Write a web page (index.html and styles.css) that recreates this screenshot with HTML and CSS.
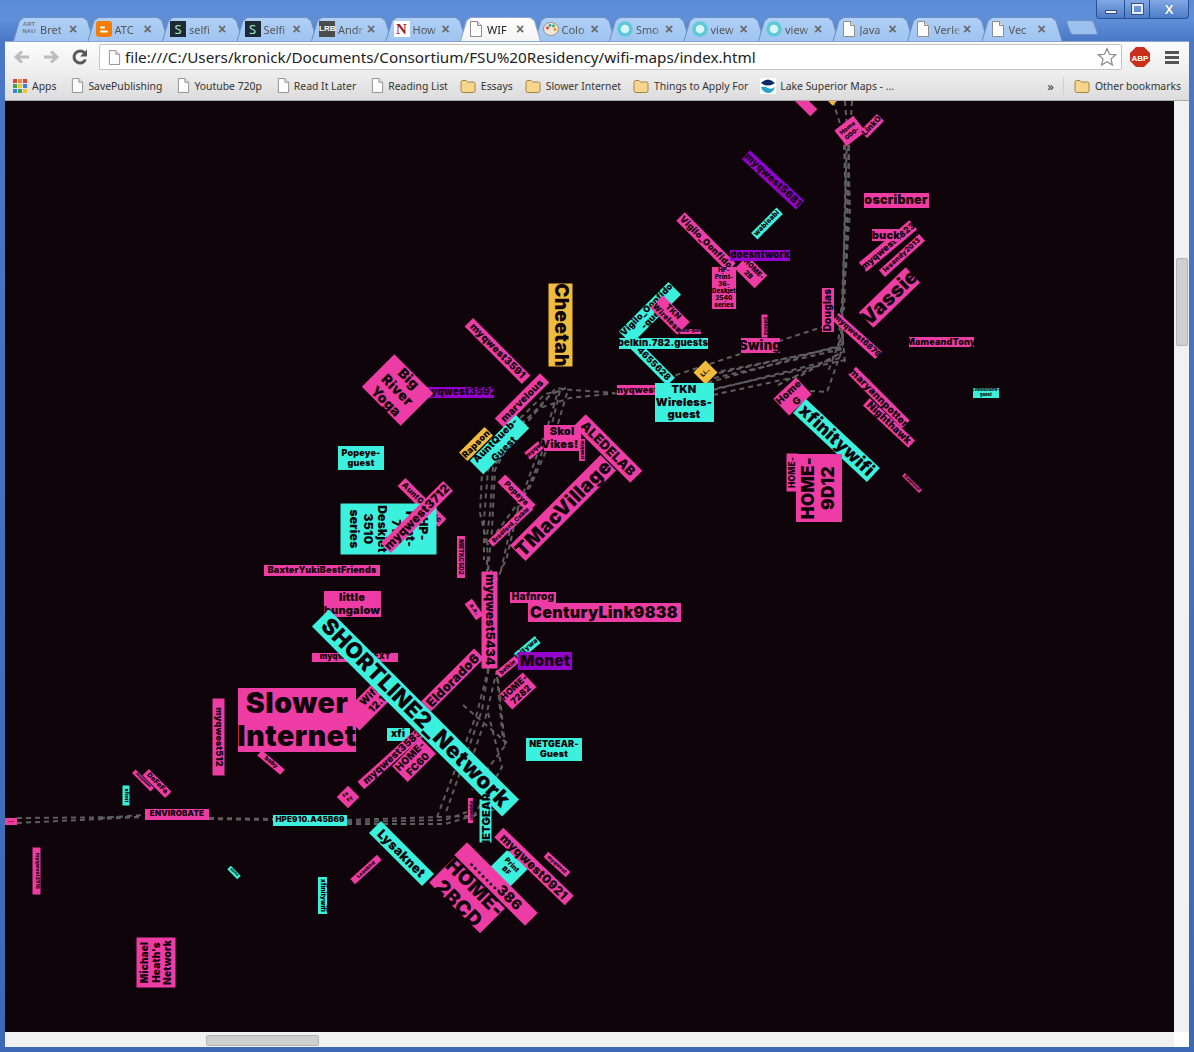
FILE: index.html

```html
<!DOCTYPE html>
<html lang="en">
<head>
    <meta charset="UTF-8">
    <title>WIFI Maps</title>
    <link rel="stylesheet" href="styles.css">
</head>
<body>
    <svg class="icon-defs" width="0" height="0">
        <symbol id="doc" viewBox="0 0 14 16">
            <path d="M1.5 .5h7l4 4v11h-11z" fill="#fdfdfd" stroke="#8d8d8d"/>
            <path d="M8.5 .5v4h4" fill="#e4e4e4" stroke="#8d8d8d"/>
        </symbol>
        <symbol id="folder" viewBox="0 0 16 14">
            <path d="M1 3.5q0-2 2-2h3l1.500 1.500h6q1.500 0 1.500 1.500v7q0 2-2 2h-10q-2 0-2-2z" fill="#f6d68c" stroke="#a38447"/>
        </symbol>
        <symbol id="ring" viewBox="0 0 16 16">
            <circle cx="8" cy="8" r="6" fill="#d9f5f5" stroke="#5cc9d4" stroke-width="3.400"/>
        </symbol>
    </svg>

    <div class="window">
        <div class="tabstrip">
            <div class="tabs">
                <div class="tab">
                    <span class="fav fav-art">ART<br>NAU</span>
                    <span class="title">Bret</span><span class="close">×</span>
                </div>
                <div class="tab">
                    <svg class="fav" viewBox="0 0 16 16"><rect width="16" height="16" rx="3" fill="#f57d00"/><path d="M5 10.500h6M5 6.500h3" stroke="#fff" stroke-width="2" stroke-linecap="round"/></svg>
                    <span class="title">ATC</span><span class="close">×</span>
                </div>
                <div class="tab">
                    <span class="fav fav-s">S</span>
                    <span class="title">selfi</span><span class="close">×</span>
                </div>
                <div class="tab">
                    <span class="fav fav-s">S</span>
                    <span class="title">Selfi</span><span class="close">×</span>
                </div>
                <div class="tab">
                    <span class="fav fav-lrb">LRB</span>
                    <span class="title">Andr</span><span class="close">×</span>
                </div>
                <div class="tab">
                    <span class="fav fav-n">N</span>
                    <span class="title">How</span><span class="close">×</span>
                </div>
                <div class="tab active">
                    <svg class="fav"><use href="#doc"/></svg>
                    <span class="title">WIF</span><span class="close">×</span>
                </div>
                <div class="tab">
                    <svg class="fav" viewBox="0 0 16 16"><ellipse cx="8" cy="8" rx="7.500" ry="6.500" fill="#efe6d8" stroke="#9a9080"/><circle cx="4.500" cy="7" r="1.400" fill="#d33"/><circle cx="7" cy="4.500" r="1.400" fill="#39b"/><circle cx="10.500" cy="5" r="1.400" fill="#4a4"/><circle cx="12" cy="8.500" r="1.400" fill="#e90"/></svg>
                    <span class="title">Colo</span><span class="close">×</span>
                </div>
                <div class="tab">
                    <svg class="fav"><use href="#ring"/></svg>
                    <span class="title">Smo</span><span class="close">×</span>
                </div>
                <div class="tab">
                    <svg class="fav"><use href="#ring"/></svg>
                    <span class="title">view</span><span class="close">×</span>
                </div>
                <div class="tab">
                    <svg class="fav"><use href="#ring"/></svg>
                    <span class="title">view</span><span class="close">×</span>
                </div>
                <div class="tab">
                    <svg class="fav"><use href="#doc"/></svg>
                    <span class="title">Java</span><span class="close">×</span>
                </div>
                <div class="tab">
                    <svg class="fav"><use href="#doc"/></svg>
                    <span class="title">Verle</span><span class="close">×</span>
                </div>
                <div class="tab">
                    <svg class="fav"><use href="#doc"/></svg>
                    <span class="title">Vec</span><span class="close">×</span>
                </div>
                <div class="new-tab"></div>
            </div>
            <div class="window-controls">
                <span class="ctl ctl-min"><i></i></span>
                <span class="ctl ctl-max"><i></i></span>
                <span class="ctl ctl-close">X</span>
            </div>
        </div>

        <div class="toolbar">
            <svg class="nav-icon" viewBox="0 0 18 18"><path d="M16 9H4M9 3.500 3 9l6 5.500" fill="none" stroke="#bcbcbc" stroke-width="3"/></svg>
            <svg class="nav-icon" viewBox="0 0 18 18"><path d="M2 9h12M9 3.500 15 9l-6 5.500" fill="none" stroke="#bcbcbc" stroke-width="3"/></svg>
            <svg class="nav-icon" viewBox="0 0 18 18"><path d="M14.500 11.500A6 6 0 1 1 13.500 5" fill="none" stroke="#5a5a5a" stroke-width="3"/><path d="M16 1.500V8.500H9z" fill="#5a5a5a"/></svg>
            <div class="omnibox">
                <svg class="omni-doc"><use href="#doc"/></svg>
                <span class="url">file:///C:/Users/kronick/Documents/Consortium/FSU%20Residency/wifi-maps/index.html</span>
                <svg class="star" viewBox="0 0 20 20"><path d="M10 1.500l2.500 5.800 6.200.5-4.700 4.100 1.400 6.100L10 14.800l-5.400 3.200 1.400-6.100L1.300 7.800l6.200-.5z" fill="#fff" stroke="#8a8a8a" stroke-width="1.200"/></svg>
            </div>
            <svg class="abp" viewBox="0 0 20 20"><path d="M6 0h8l6 6v8l-6 6H6l-6-6V6z" fill="#c8301e"/><text x="10" y="13.500" text-anchor="middle" class="abp-text">ABP</text></svg>
            <div class="menu"><i></i><i></i><i></i></div>
        </div>

        <div class="bookmarks">
            <div class="bm bm-apps">
                <span class="apps-grid">
                    <i class="r"></i><i class="o"></i><i class="r"></i>
                    <i class="g"></i><i class="y"></i><i class="b"></i>
                    <i class="b"></i><i class="g"></i><i class="y"></i>
                </span>Apps
            </div>
            <div class="bm bm-page"><svg class="bm-doc"><use href="#doc"/></svg>SavePublishing</div>
            <div class="bm bm-page"><svg class="bm-doc"><use href="#doc"/></svg>Youtube 720p</div>
            <div class="bm bm-page"><svg class="bm-doc"><use href="#doc"/></svg>Read It Later</div>
            <div class="bm"><svg class="bm-doc"><use href="#doc"/></svg>Reading List</div>
            <div class="bm"><svg class="bm-folder"><use href="#folder"/></svg>Essays</div>
            <div class="bm"><svg class="bm-folder"><use href="#folder"/></svg>Slower Internet</div>
            <div class="bm"><svg class="bm-folder"><use href="#folder"/></svg>Things to Apply For</div>
            <div class="bm">
                <svg class="bm-noaa" viewBox="0 0 16 16"><rect width="16" height="16" fill="#fff"/><circle cx="8" cy="8" r="7" fill="#fff"/><path d="M1 5q7-7 14 0-7 5-14 0z" fill="#0d2a66"/><path d="M1 9q4-1 7 1t7-1q-2 6-7 6T1 9z" fill="#2aa3d0"/></svg>
                Lake Superior Maps - ...
            </div>
            <div class="bm-more">»</div>
            <div class="bm bm-other"><svg class="bm-folder"><use href="#folder"/></svg>Other bookmarks</div>
        </div>

        <div class="page">
            <div class="map" id="map"></div>
            <div class="vscroll"><div class="vthumb"></div></div>
        </div>
        <div class="hscroll">
            <div class="hthumb"></div>
            <div class="corner"></div>
        </div>
    </div>

    <script src="map.js"></script>
</body>
</html>
```

FILE: styles.css

```css
* {
    margin: 0;
    padding: 0;
    box-sizing: border-box;
}

body {
    font-family: "Noto Sans", Tahoma, sans-serif;
    background: #3f6db8;
    overflow: hidden;
}

.icon-defs {
    position: absolute;
}

.window {
    display: flex;
    flex-direction: column;
    height: 1052px;
    width: 1194px;
    background: linear-gradient(180deg, #5a8bd6 0, #5f8fd8 20px, #4a78c6 41px, #3d69b4 100%);
    padding: 0 5px 5px;
}

/* tab strip */

.tabstrip {
    display: flex;
    height: 41px;
    margin: 0 -5px;
    flex-shrink: 0;
}

.tabs {
    display: flex;
    padding: 17px 0 0 11px;
    align-items: flex-end;
}

.tab {
    position: relative;
    display: flex;
    align-items: center;
    width: 85px;
    height: 24px;
    margin-right: -10.5px;
    padding-left: 10px;
    font-size: 11px;
    color: #555;
    background: #6c8fc4;
    clip-path: polygon(0 100%, 2px 100%, 8px 3px, 12px 0, 73px 0, 77px 3px, 83px 100%, 85px 100%);
}

.tab::before {
    content: "";
    position: absolute;
    inset: 1px 1px 0 1px;
    background: linear-gradient(180deg, #afd0f6, #9fc4f0);
    clip-path: polygon(0 100%, 2px 100%, 8px 3px, 12px 0, 71px 0, 75px 3px, 81px 100%, 83px 100%);
}

.tab > * {
    position: relative;
}

.tab.active {
    z-index: 2;
    color: #222;
    background: #8aa6d0;
}

.tab.active::before {
    background: linear-gradient(180deg, #ffffff, #f4f4f4);
}

.fav {
    display: block;
    width: 16px;
    height: 16px;
    flex-shrink: 0;
}

.fav-art {
    font: bold 6px/6.500px "Liberation Sans", sans-serif;
    color: #777;
    text-align: center;
}

.fav-s {
    background: #1d2a33;
    color: #9fe6d0;
    font-size: 13px;
    line-height: 16px;
    text-align: center;
}

.fav-lrb {
    background: #4c4c4c;
    color: #fff;
    font: bold 8px/16px "Liberation Sans", sans-serif;
    text-align: center;
}

.fav-n {
    background: #fff;
    color: #a5182c;
    font: bold 15px/16px "Liberation Serif", serif;
    text-align: center;
}

.title {
    width: 26px;
    margin-left: 3px;
    white-space: nowrap;
    -webkit-mask-image: linear-gradient(90deg, #000 70%, rgba(0, 0, 0, 0.25));
    mask-image: linear-gradient(90deg, #000 70%, rgba(0, 0, 0, 0.25));
}

.close {
    width: 12px;
    margin-left: 1px;
    font: bold 14px/14px "Liberation Sans", sans-serif;
    color: #666;
    text-align: center;
}

.new-tab {
    width: 28px;
    height: 15px;
    margin: 0 0 6px 14px;
    background: #9cc0ee;
    border: 1px solid #6c8fc4;
    border-radius: 3px;
    transform: skewX(20deg);
}

.window-controls {
    display: flex;
    height: 19px;
    margin: 0 5px 0 auto;
    border: 1px solid #2c4f8e;
    border-top: none;
    border-radius: 0 0 4px 4px;
    background: linear-gradient(180deg, #80a8e4, #4e7cc8);
}

.ctl {
    display: flex;
    align-items: center;
    justify-content: center;
    border-left: 1px solid #2c4f8e;
    color: #fff;
}

.ctl-min {
    width: 27px;
    border-left: none;
}

.ctl-min i {
    width: 12px;
    height: 4px;
    margin-top: 6px;
    background: #e8eef8;
    border: 1px solid #33507f;
}

.ctl-max {
    width: 25px;
}

.ctl-max i {
    width: 11px;
    height: 10px;
    border: 2px solid #e8eef8;
    outline: 1px solid #33507f;
}

.ctl-close {
    width: 39px;
    font: bold 13px "Liberation Sans", sans-serif;
    text-shadow: 0 0 1px #33507f;
}

/* toolbar */

.toolbar {
    display: flex;
    align-items: center;
    height: 31px;
    flex-shrink: 0;
    background: linear-gradient(180deg, #fdfdfd, #eeeeee);
    border-top: 1px solid #8aa6d0;
    padding-left: 8px;
}

.nav-icon {
    width: 18px;
    height: 18px;
    margin-right: 11px;
}

.omnibox {
    display: flex;
    align-items: center;
    width: 1023px;
    height: 26px;
    margin-left: -1px;
    padding: 0 4px 0 8px;
    background: #fff;
    border: 1px solid #c4c4c4;
    border-radius: 2px;
}

.omni-doc {
    width: 13px;
    height: 15px;
    flex-shrink: 0;
}

.url {
    margin-left: 4px;
    font-size: 15.250px;
    color: #222;
    white-space: nowrap;
}

.star {
    width: 20px;
    height: 20px;
    margin-left: auto;
}

.abp {
    width: 20px;
    height: 20px;
    margin-left: 8px;
}

.abp-text {
    font: bold 8px "Liberation Sans", sans-serif;
    fill: #fff;
}

.menu {
    display: flex;
    flex-direction: column;
    gap: 2px;
    margin-left: 15px;
}

.menu i {
    display: block;
    width: 14px;
    height: 3px;
    background: #555;
}

/* bookmarks bar */

.bookmarks {
    display: flex;
    align-items: center;
    height: 29px;
    flex-shrink: 0;
    padding: 0 8px 1px 8px;
    background: linear-gradient(180deg, #eeeeee, #dcdcdc);
    border-bottom: 1px solid #a8a8a8;
    font-size: 10.400px;
    color: #333;
    white-space: nowrap;
}

.bm {
    display: flex;
    align-items: center;
    margin-right: 12px;
}

.bm-apps,
.bm-page {
    margin-right: 15px;
}

.apps-grid {
    display: grid;
    grid-template-columns: repeat(3, 4px);
    gap: 1px;
    margin-right: 5px;
}

.apps-grid i {
    display: block;
    height: 4px;
}

.apps-grid .r { background: #e0453a; }
.apps-grid .o { background: #e88a2e; }
.apps-grid .g { background: #3da84f; }
.apps-grid .y { background: #f2c230; }
.apps-grid .b { background: #3d7fe0; }

.bm-doc {
    width: 13px;
    height: 15px;
    margin-right: 4px;
}

.bm-folder {
    width: 16px;
    height: 14px;
    margin-right: 5px;
}

.bm-noaa {
    width: 16px;
    height: 16px;
    margin-right: 4px;
}

.bm-more {
    margin-left: auto;
    padding-right: 9px;
    border-right: 1px solid #cfcfcf;
    font-size: 13px;
}

.bm-other {
    margin: 0 0 0 10px;
}

/* page area */

.page {
    display: flex;
    flex: 1;
    min-height: 0;
}

.map {
    position: relative;
    flex: 1;
    overflow: hidden;
    background: #0f0409;
}

.vscroll {
    width: 15px;
    padding: 157px 1px 0 2px;
    background: #f1f1f1;
}

.vthumb {
    height: 88px;
    background: #cfcfcf;
    border: 1px solid #b4b4b4;
    border-radius: 2px;
}

.hscroll {
    display: flex;
    height: 15px;
    flex-shrink: 0;
    padding-left: 201px;
    background: #f1f1f1;
    position: relative;
}

.hthumb {
    width: 113px;
    height: 11px;
    margin-top: 3px;
    background: #cfcfcf;
    border: 1px solid #b4b4b4;
    border-radius: 2px;
}

.corner {
    width: 15px;
    margin-left: auto;
    background: #fff;
}

/* map */

.links {
    position: absolute;
    left: 0;
    top: 0;
    width: 100%;
    height: 100%;
}

.links path {
    fill: none;
    stroke: #5e5e5e;
    stroke-width: 2;
    stroke-dasharray: 5 4;
}

.label {
    position: absolute;
    display: flex;
    align-items: center;
    justify-content: center;
    font-family: Inter, "Liberation Sans", sans-serif;
    font-weight: 900;
    letter-spacing: 0.02em;
    line-height: 1.150;
    text-align: center;
    white-space: pre;
    color: #0f0409;
}

.pink { background: #ee3ca5; }
.teal { background: #3bf0dc; }
.purple { background: #9400cc; }
.yellow { background: #efbc3d; }
```

FILE: map.js

```js
// map origin in window coordinates
const OX = 5;
const OY = 101;

// [colour, centre x, centre y, width, height, angle, font size, text]
// drawn in order, so later ones cover earlier ones
const networks = [
    ['pink', 806, 105, 22, 10, 45, 5, ''],
    ['yellow', 832, 100, 7, 7, 45, 4, ''],
    ['pink', 850, 131, 24, 20, -38, 6, 'Home\n0D0-'],
    ['pink', 872, 126, 24, 10, -45, 8, 'LinkO'],
    ['purple', 773, 180, 74, 12, 43, 10, 'myqwest5681'],
    ['pink', 896, 200, 65, 15, 0, 12.500, 'oscribner'],
    ['teal', 767, 223, 36, 9, -45, 7, 'wabisabi'],
    ['pink', 706, 242, 72, 12, 45, 9, 'Vigilo_Oonfido'],
    ['pink', 751, 272, 28, 18, 45, 7, 'HOME-\n2B'],
    ['purple', 760, 255, 60, 11, 0, 9.500, 'doesntwork'],
    ['pink', 724, 288, 24, 42, 0, 6, 'HP-\nPrint-\n36-\nDeskjet\n2540\nseries'],
    ['pink', 888, 246, 66, 12, -40, 9, 'myqwest6823'],
    ['pink', 886, 235, 28, 12, 0, 11, 'buck'],
    ['pink', 902, 255, 54, 9, -42, 7, 'lesandy2013'],
    ['pink', 889, 297, 65, 21, -44, 20, 'Vassie'],
    ['pink', 828, 310, 44, 12, -90, 10, 'Douglas'],
    ['pink', 857, 336, 58, 10, 42, 8, 'myqwest6876'],
    ['pink', 764, 326, 23, 6, 90, 5, '2dlm12'],
    ['pink', 760, 345, 39, 15, 0, 13, 'Swing'],
    ['pink', 941, 342, 65, 10, 0, 9, 'MameandTony'],
    ['teal', 986, 393, 26, 10, 0, 4, 'LittleGiraffe-\nguest'],
    ['teal', 650, 313, 70, 18, -45, 9, 'Vigilo_Oonfido\n-guest'],
    ['teal', 652, 362, 54, 11, 45, 9, '-4655628'],
    ['pink', 670, 315, 38, 18, 45, 8, 'TKN\nWireless'],
    ['pink', 690, 331, 21, 5, 0, 4, 'belkin-guest'],
    ['teal', 663, 343, 89, 11, 0, 9.500, 'belkin.782.guests'],
    ['yellow', 705, 372, 17, 17, -45, 6, 'Li..'],
    ['pink', 636, 390, 38, 10, 0, 9, 'myqwest'],
    ['teal', 684, 402, 59, 39, 0, 11, 'TKN\nWireless-\nguest'],
    ['pink', 792, 396, 31, 23, -43, 10, 'Home\nG'],
    ['teal', 836, 440, 101, 19, 43, 17.500, 'xfinitywifi'],
    ['pink', 879, 397, 76, 11, 45, 10, 'maryannpotter'],
    ['pink', 889, 423, 62, 10, 43, 10, 'Nighthawk'],
    ['pink', 791.500, 472, 38, 11, -90, 8.500, 'HOME-'],
    ['pink', 819, 488, 68, 46, -90, 17, 'HOME-\n9D12'],
    ['pink', 912, 483, 24, 4, 45, 4, 'Dolphinet'],
    ['yellow', 560, 325, 83, 24, 90, 19, 'Cheetah'],
    ['pink', 497, 351, 81, 12, 45, 10, 'myqwest3591'],
    ['purple', 459, 392, 70, 11, 0, 10, 'myqwest3592'],
    ['pink', 397, 390, 55, 46, 45, 14, 'Big\nRiver\nYoga'],
    ['pink', 522, 400, 64, 13, -45, 10, 'marvelous'],
    ['yellow', 476, 444, 36, 12, -45, 9, 'Rapson'],
    ['teal', 499, 444, 65, 19, -45, 10, 'AuntQueb-\nGuest'],
    ['pink', 534, 450, 18, 9, -40, 6, 'myqw'],
    ['pink', 608, 448, 80, 17, 45, 13, 'ALEDELAB'],
    ['pink', 562, 438, 37, 26, 0, 11, 'Skol\nVikes!!'],
    ['pink', 582, 450, 22, 6, 90, 4, 'myqwest'],
    ['pink', 563, 508, 128, 22, -45, 19.500, 'TMacVillage'],
    ['pink', 516, 493, 43, 11, 45, 8, 'Popeye'],
    ['pink', 510, 525, 55, 8, -43, 6, 'Bradford_Cable'],
    ['teal', 361, 458, 46, 24, 0, 9, 'Popeye-\nguest'],
    ['pink', 422, 502, 58, 11, 45, 8, 'AuntQuebec'],
    ['teal', 388, 529, 51, 96, 90, 12, 'HP-\nPrint-\n71-\nDeskjet\n3510\nseries'],
    ['pink', 417, 517, 88, 14, -45, 12, 'myqwest3712'],
    ['pink', 461, 557, 42, 8, 90, 6, 'MBTKC5D2'],
    ['pink', 322, 570, 116, 11, 0, 9, 'BaxterYukiBestFriends'],
    ['pink', 352, 604, 57, 26, 0, 11, 'little\nbungalow'],
    ['pink', 474, 609, 20, 9, 55, 6, 'a.e.'],
    ['pink', 533, 597, 46, 11, 0, 10, 'Hafnrog'],
    ['pink', 604, 612, 153, 19, 0, 16, 'CenturyLink9838'],
    ['pink', 355, 657, 86, 9, 0, 8, 'myqwest2.1-EXT'],
    ['pink', 373, 700, 62, 24, -45, 10, 'Wifi\n12.1'],
    ['pink', 452, 680, 75, 14, -45, 13, 'Eldorado6'],
    ['pink', 489, 620, 97, 16, 90, 12, 'myqwest5434'],
    ['teal', 527, 648, 28, 9, -40, 7, 'xfinitywave'],
    ['pink', 507, 667, 25, 8, -40, 6, 'belkin'],
    ['purple', 545, 661, 54, 18, 0, 15, 'Monet'],
    ['pink', 517, 691, 33, 20, -43, 9, 'HOME-\n7282'],
    ['pink', 297, 720, 118, 64, 0, 28.500, 'Slower\nInternet'],
    ['pink', 271, 762, 30, 7, 40, 6, 'baby'],
    ['teal', 554, 749, 56, 23, 0, 9, 'NETGEAR-\nGuest'],
    ['teal', 398, 734, 23, 13, 0, 10, 'xfi'],
    ['pink', 392, 757, 85, 10, -42, 10, 'myqwest3583'],
    ['pink', 414, 760, 40, 22, -45, 10, 'HOME-\nFC60'],
    ['teal', 415, 713, 269, 24, 45, 22, 'SHORTLINE2_Network'],
    ['pink', 348, 797, 16, 16, -45, 5, 'Fa\nFy'],
    ['pink', 470, 810, 25, 5, 90, 4, 'myqwest'],
    ['teal', 485, 821, 43, 12, -90, 11, 'NETGEAR'],
    ['teal', 310, 820, 74, 11, 0, 8, 'HPE910.A45B69'],
    ['teal', 509, 868, 28, 28, 45, 7, 'Print\nBF'],
    ['pink', 534, 866, 98, 13, 44, 12, 'myqwest0921'],
    ['pink', 496, 884, 100, 18, 45, 14, '.......386'],
    ['pink', 467, 895, 72, 35, 45, 20, 'HOME-\n2BCD'],
    ['teal', 401, 853, 75, 17, 45, 13, 'Lysaknet'],
    ['pink', 366, 869, 36, 7, -42, 5, 'Leasbird'],
    ['pink', 557, 864, 30, 7, 42, 5, 'myqwest'],
    ['pink', 11, 821, 12, 7, 0, 5, '...'],
    ['pink', 143, 780, 26, 5, 45, 4, 'myqwest'],
    ['pink', 157, 783, 32, 9, 45, 7, 'DeFeFa'],
    ['teal', 126, 795, 20, 7, 90, 5, 'xfinit'],
    ['pink', 177, 814, 64, 11, 0, 8, 'ENVIROBATE'],
    ['pink', 218, 737, 77, 12, 90, 9, 'myqwest512'],
    ['pink', 36, 871, 47, 8, 90, 5, 'myqwest2916'],
    ['teal', 234, 872, 14, 5, 45, 4, 'xxxx'],
    ['teal', 322, 895, 37, 9, 90, 6, 'xfinitywifi'],
    ['pink', 156, 962, 50, 39, -90, 10, "Michael\nHeath's\nNetwork"]
];

// dashed links between networks, window coordinates
const links = [
    'M833 101 L845 140 L846 190 L843 280 L842 345',
    'M845 101 L848 140 L850 210 L846 270',
    'M852 101 L849 150 L848 200 L846 260 L843 290 L838 345',
    'M847 140 L845 200 L843 300 L840 350',
    'M844 145 L846 210 L842 300 L843 345',
    'M849 145 L847 230 L844 310',
    'M655 395 L700 385 L841 345',
    'M667 378 L822 327',
    'M710 375 L843 346',
    'M712 373 L843 347',
    'M714 378 L843 349',
    'M700 392 L845 360',
    'M713 390 L840 358',
    'M713 395 L800 376 L842 352',
    'M810 391 L827 392 L842 350',
    'M778 385 L843 352',
    'M840 340 L828 372',
    'M842 330 L845 362',
    'M617 393 L570 398 L540 408 L500 440 L482 473 L480 513 L487 543 L490 600',
    'M617 393 L572 390 L556 388 L525 425 L493 467 L490 513 L486 543',
    'M560 391 L545 394 L510 428 L488 470 L484 520 L484 560',
    'M566 388 L550 395 L515 432 L495 470 L492 530 L488 570',
    'M560 391 L553 420 L537 467 L517 513 L507 557 L497 580',
    'M567 393 L557 427 L530 487 L487 545',
    'M557 395 L548 425 L528 480 L510 530 L500 575',
    'M487 560 L488 670 L477 713 L437 817',
    'M491 570 L490 660 L482 710 L445 815',
    'M497 670 L485 720 L468 770',
    'M497 677 L503 740 L507 743 L472 790',
    'M463 705 L507 743',
    'M488 713 L502 767 L470 823',
    'M497 670 L505 745',
    'M17 818 L143 817',
    'M17 823 L80 820 L143 817',
    'M100 818 L143 815',
    'M209 818 L273 819',
    'M209 819 L273 820',
    'M347 820 L470 816',
    'M347 824 L445 824 L500 808',
    'M347 822 L445 820 L467 812'
];

const map = document.getElementById('map');

let svg = '<svg class="links"><g transform="translate(' + (-OX) + ' ' + (-OY) + ')">';
links.forEach(d => {
    svg += '<path d="' + d + '"/>';
});
svg += '</g></svg>';
map.innerHTML = svg;

networks.forEach(n => {
    const [colour, cx, cy, w, h, angle, size, text] = n;
    const label = document.createElement('div');
    label.className = 'label ' + colour;
    label.style.left = (cx - OX - w / 2) + 'px';
    label.style.top = (cy - OY - h / 2) + 'px';
    label.style.width = w + 'px';
    label.style.height = h + 'px';
    label.style.fontSize = size + 'px';
    label.style.transform = 'rotate(' + angle + 'deg)';
    label.textContent = text;
    map.appendChild(label);
});
```
